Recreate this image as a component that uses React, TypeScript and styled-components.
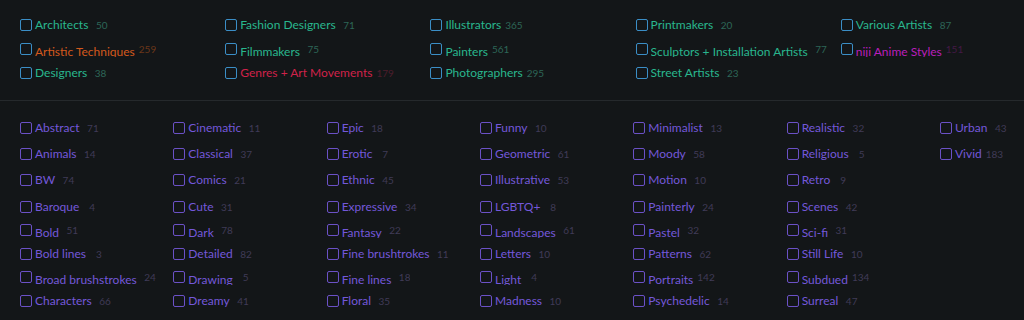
import React from "react";
import styled, { createGlobalStyle } from "styled-components";

const Global = createGlobalStyle`
  html, body { margin: 0; padding: 0; background: #131618; }
  body { font-family: Lato, "Open Sans", sans-serif; }
`;

type Tone = "teal" | "orange" | "red" | "magenta" | "purple";

const tones: Record<Tone, { label: string; count: string; box: string }> = {
  teal: { label: "#29b68e", count: "#2d6657", box: "#3b8ec6" },
  orange: { label: "#d4591d", count: "#6c3718", box: "#3b8ec6" },
  red: { label: "#d0224a", count: "#4d1d2c", box: "#3b8ec6" },
  magenta: { label: "#ba1ebb", count: "#441946", box: "#3b8ec6" },
  purple: { label: "#7358da", count: "#403b57", box: "#6b51c6" },
};

type Entry = { name: string; count: number; tone?: Tone };

const topColumns: Entry[][] = [
  [
    { name: "Architects", count: 50 },
    { name: "Artistic Techniques", count: 259, tone: "orange" },
    { name: "Designers", count: 38 },
  ],
  [
    { name: "Fashion Designers", count: 71 },
    { name: "Filmmakers", count: 75 },
    { name: "Genres + Art Movements", count: 179, tone: "red" },
  ],
  [
    { name: "Illustrators", count: 365 },
    { name: "Painters", count: 561 },
    { name: "Photographers", count: 295 },
  ],
  [
    { name: "Printmakers", count: 20 },
    { name: "Sculptors + Installation Artists", count: 77 },
    { name: "Street Artists", count: 23 },
  ],
  [
    { name: "Various Artists", count: 87 },
    { name: "niji Anime Styles", count: 151, tone: "magenta" },
  ],
];

const bottomColumns: [string, number][][] = [
  [["Abstract", 71], ["Animals", 14], ["BW", 74], ["Baroque", 4], ["Bold", 51], ["Bold lines", 3], ["Broad brushstrokes", 24], ["Characters", 66]],
  [["Cinematic", 11], ["Classical", 37], ["Comics", 21], ["Cute", 31], ["Dark", 78], ["Detailed", 82], ["Drawing", 5], ["Dreamy", 41]],
  [["Epic", 18], ["Erotic", 7], ["Ethnic", 45], ["Expressive", 34], ["Fantasy", 22], ["Fine brushtrokes", 11], ["Fine lines", 18], ["Floral", 35]],
  [["Funny", 10], ["Geometric", 61], ["Illustrative", 53], ["LGBTQ+", 8], ["Landscapes", 61], ["Letters", 10], ["Light", 4], ["Madness", 10]],
  [["Minimalist", 13], ["Moody", 58], ["Motion", 10], ["Painterly", 24], ["Pastel", 32], ["Patterns", 62], ["Portraits", 142], ["Psychedelic", 14]],
  [["Realistic", 32], ["Religious", 5], ["Retro", 9], ["Scenes", 42], ["Sci-fi", 31], ["Still Life", 10], ["Subdued", 134], ["Surreal", 47]],
  [["Urban", 43], ["Vivid", 183]],
];

const Page = styled.div`
  width: 1024px;
  height: 320px;
  overflow: hidden;
  background: #131618;
`;

const TopSection = styled.section`
  display: grid;
  grid-template-columns: repeat(5, 205.2px);
  grid-template-rows: repeat(3, 24px);
  grid-auto-flow: column;
  padding: 19px 0 9px 20px;
  border-bottom: 1px solid #25292c;
`;

const BottomSection = styled.section`
  display: grid;
  grid-template-columns: repeat(6, 153.33px) auto;
  grid-template-rows: 26px 26px 27px 23px 24px 23px 24px 24px;
  grid-auto-flow: column;
  padding: 21px 0 0 20px;
`;

const Item = styled.label`
  display: flex;
  align-items: flex-start;
  gap: 3px;
  min-width: 0;
  cursor: pointer;
`;

const Box = styled.span<{ $tone: Tone }>`
  flex: none;
  width: 12px;
  height: 12px;
  box-sizing: border-box;
  border: 1.2px solid ${(p) => tones[p.$tone].box};
  border-radius: 2px;
`;

const Text = styled.span<{ $raised: boolean }>`
  display: block;
  height: ${(p) => (p.$raised ? "14px" : "auto")};
  overflow: ${(p) => (p.$raised ? "hidden" : "visible")};
  line-height: 12px;
  font-size: 12px;
  white-space: nowrap;
`;

const Label = styled.span<{ $tone: Tone }>`
  font-size: 12px;
  line-height: 12px;
  color: ${(p) => tones[p.$tone].label};
`;

const Count = styled.span<{ $tone: Tone; $digits: number; $raised: boolean }>`
  font-size: 10px;
  line-height: 12px;
  color: ${(p) => tones[p.$tone].count};
  margin-left: ${(p) => (p.$digits === 1 ? 10 : p.$digits === 2 ? 7.5 : 4)}px;
  vertical-align: ${(p) => (p.$raised ? "3px" : "baseline")};
`;

function Choice({ name, count, tone, raised }: { name: string; count: number; tone: Tone; raised: boolean }) {
  return (
    <Item>
      <Box $tone={tone} />
      <Text $raised={raised}>
        <Label $tone={tone}>{name}</Label>
        <Count $tone={tone} $digits={String(count).length} $raised={raised}>
          {count}
        </Count>
      </Text>
    </Item>
  );
}

export default function App() {
  return (
    <Page>
      <Global />
      <TopSection>
        {topColumns.map((col, c) =>
          col.map((e, r) => (
            <Choice key={`${c}-${r}`} name={e.name} count={e.count} tone={e.tone ?? "teal"} raised={r === 1} />
          ))
        )}
      </TopSection>
      <BottomSection>
        {bottomColumns.map((col, c) =>
          col.map(([name, count], r) => (
            <Choice key={`${c}-${r}`} name={name} count={count} tone="purple" raised={r === 4 || r === 6} />
          ))
        )}
      </BottomSection>
    </Page>
  );
}
